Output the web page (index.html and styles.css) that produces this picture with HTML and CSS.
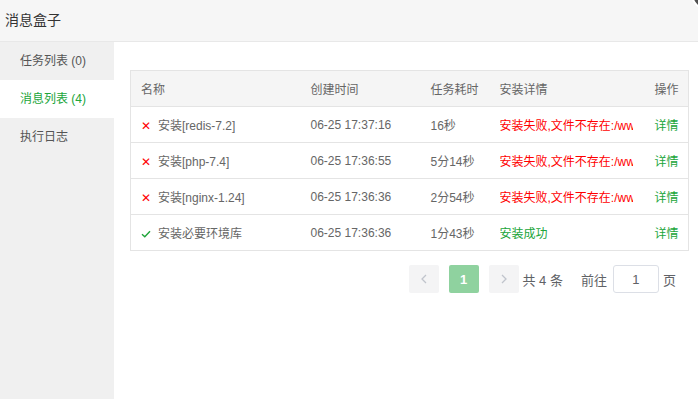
FILE: index.html
```html
<!DOCTYPE html>
<html lang="zh">
<head>
<meta charset="utf-8">
<link rel="stylesheet" href="styles.css">
</head>
<body>
<div class="layer">
  <div class="close-btn"></div>
  <div class="header">消息盒子</div>
  <div class="main">
    <div class="sidebar">
      <div class="side-item">任务列表 (0)</div>
      <div class="side-item active">消息列表 (4)</div>
      <div class="side-item">执行日志</div>
    </div>
    <div class="content">
      <table class="grid">
        <colgroup>
          <col class="c1"><col class="c2"><col class="c3"><col class="c4"><col class="c5">
        </colgroup>
        <thead>
          <tr><th>名称</th><th>创建时间</th><th>任务耗时</th><th>安装详情</th><th>操作</th></tr>
        </thead>
        <tbody>
          <tr>
            <td><span class="ico fail">✕</span>安装[redis-7.2]</td>
            <td>06-25 17:37:16</td><td>16秒</td>
            <td><div class="clip red">安装失败,文件不存在:/www/server/panel/install/redis.sh</div></td>
            <td class="link">详情</td>
          </tr>
          <tr>
            <td><span class="ico fail">✕</span>安装[php-7.4]</td>
            <td>06-25 17:36:55</td><td>5分14秒</td>
            <td><div class="clip red">安装失败,文件不存在:/www/server/panel/install/php.sh</div></td>
            <td class="link">详情</td>
          </tr>
          <tr>
            <td><span class="ico fail">✕</span>安装[nginx-1.24]</td>
            <td>06-25 17:36:36</td><td>2分54秒</td>
            <td><div class="clip red">安装失败,文件不存在:/www/server/panel/install/nginx.sh</div></td>
            <td class="link">详情</td>
          </tr>
          <tr>
            <td><span class="ico ok"><svg width="10" height="8" viewBox="0 0 10 8"><path d="M1 4.2 L3.8 6.8 L9 1.2" fill="none" stroke="#20a53a" stroke-width="1.4"/></svg></span>安装必要环境库</td>
            <td>06-25 17:36:36</td><td>1分43秒</td>
            <td><div class="clip green">安装成功</div></td>
            <td class="link">详情</td>
          </tr>
        </tbody>
      </table>
      <div class="pager">
        <span class="pbtn arrow"><svg width="8" height="10" viewBox="0 0 8 10"><path d="M6 1 L2 5 L6 9" fill="none" stroke="#c0c4cc" stroke-width="1.3"/></svg></span>
        <span class="pbtn cur">1</span>
        <span class="pbtn arrow"><svg width="8" height="10" viewBox="0 0 8 10"><path d="M2 1 L6 5 L2 9" fill="none" stroke="#c0c4cc" stroke-width="1.3"/></svg></span>
        <span class="total">共 4 条</span>
        <span class="goto">前往</span>
        <span class="pinput">1</span>
        <span class="unit">页</span>
      </div>
    </div>
  </div>
</div>
</body>
</html>
```

FILE: styles.css
```css
html, body {
  margin: 0;
  padding: 0;
  background: #fff;
}
body {
  font-family: "Liberation Sans", "Noto Sans CJK SC", sans-serif;
  font-size: 12px;
  color: #666;
  width: 698px;
  height: 399px;
  overflow: hidden;
}
.layer {
  position: relative;
  width: 698px;
  height: 399px;
  overflow: hidden;
}
.close-btn {
  position: absolute;
  left: 691px;
  top: -22px;
  width: 28px;
  height: 28px;
  border-radius: 50%;
  background: #4f4f4f;
  border: 2px solid #fff;
}
.header {
  height: 41px;
  line-height: 41px;
  padding-left: 5px;
  font-size: 14px;
  color: #333;
  background: #f6f6f6;
  border-bottom: 1px solid #e8e8e8;
}
.main {
  display: flex;
  height: 357px;
}
.sidebar {
  width: 114px;
  flex: none;
  background: #f0f0f0;
}
.side-item {
  height: 38px;
  line-height: 38px;
  padding-left: 20px;
  color: #555;
}
.side-item.active {
  background: #fff;
  color: #20a53a;
}
.content {
  flex: 1;
  padding: 28px 10px 0 16px;
}
.grid {
  width: 558px;
  border-collapse: collapse;
  table-layout: fixed;
  border: 1px solid #e4e4e4;
}
.c1 { width: 170px; }
.c2 { width: 120px; }
.c3 { width: 69px; }
.c4 { width: 155px; }
.c5 { width: 44px; }
.grid th {
  height: 35px;
  background: #f5f5f5;
  font-weight: normal;
  text-align: left;
  padding: 0 10px;
  color: #666;
  border-bottom: 1px solid #e4e4e4;
  white-space: nowrap;
  overflow: hidden;
}
.grid td {
  height: 35px;
  padding: 0 10px;
  border-bottom: 1px solid #e4e4e4;
  white-space: nowrap;
  overflow: hidden;
}
.grid th:last-child,
.grid td:last-child {
  padding: 0 0 0 10px;
}
.ico {
  display: inline-block;
  width: 10px;
  margin-right: 7px;
  text-align: center;
}
.ico.fail {
  color: #f00;
  font-size: 12px;
}
.clip {
  width: 133px;
  overflow: hidden;
  white-space: nowrap;
}
.red { color: #f00; }
.green { color: #20a53a; }
.grid td.link {
  color: #20a53a;
}
.pager {
  display: flex;
  align-items: center;
  justify-content: flex-end;
  margin-top: 14px;
  padding-right: 13px;
  height: 28px;
}
.pbtn {
  display: flex;
  align-items: center;
  justify-content: center;
  width: 30px;
  height: 28px;
  border-radius: 2px;
  background: #f4f4f5;
  margin-left: 10px;
}
.pbtn.cur {
  background: #8fd29f;
  color: #fff;
  font-weight: bold;
  font-size: 13px;
}
.total {
  margin-left: 4px;
  color: #606266;
  font-size: 13px;
}
.goto {
  margin-left: 18px;
  color: #606266;
  font-size: 13px;
}
.pinput {
  width: 44px;
  height: 26px;
  margin: 0 4px 0 6px;
  border: 1px solid #dcdfe6;
  border-radius: 3px;
  display: flex;
  align-items: center;
  justify-content: center;
  color: #606266;
  font-size: 13px;
}
.unit {
  color: #606266;
  font-size: 13px;
}
```
